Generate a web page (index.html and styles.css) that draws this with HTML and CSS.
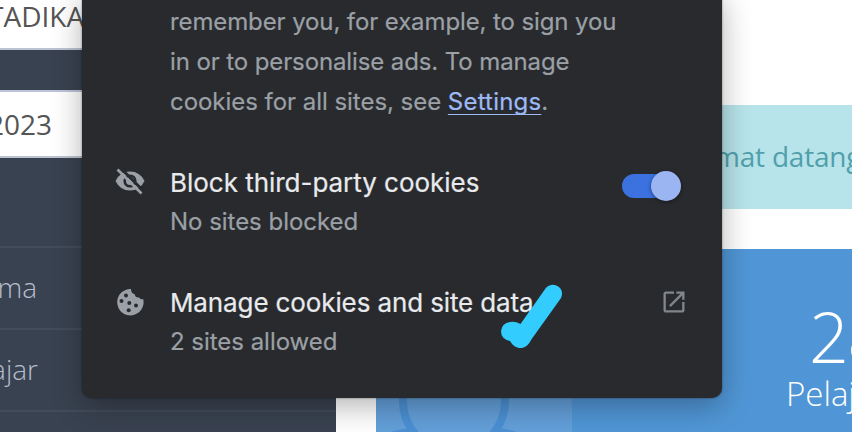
FILE: index.html
```html
<!DOCTYPE html>
<html lang="en">
<head>
<meta charset="utf-8">
<title>Cookies and site data</title>
<link rel="stylesheet" href="styles.css">
</head>
<body>
<div class="page">
  <aside class="sidebar">
    <div class="field field-name"><span>TADIKA</span></div>
    <div class="field field-year"><span>2023</span></div>
    <nav class="menu">
      <div class="menu-item"><span>ma</span></div>
      <div class="menu-item"><span>ajar</span></div>
      <div class="menu-item"></div>
    </nav>
  </aside>
  <main class="content">
    <div class="alert"><span>mat datang</span></div>
    <section class="card">
      <svg class="person" width="196" height="183" viewBox="0 0 196 183">
        <rect x="-10" y="60" width="206" height="240" rx="100" fill="#639fd9"/>
        <rect x="0" y="140" width="30" height="43" fill="#639fd9"/>
        <circle cx="78" cy="152" r="51" fill="#639fd9" stroke="#4b90d3" stroke-width="8"/>
        <path d="M15 183Q23 180 35 179L48 190M108 190L121 179Q133 180 141 183" fill="#4b90d3"/>
      </svg>
      <div class="stat"><div class="stat-number">28</div><div class="stat-label">Pelajar</div></div>
    </section>
  </main>
  <section class="popup">
    <p class="intro"><span class="l1">remember you, for example, to sign you</span><br><span class="l2">in or to personalise ads. To manage</span><br><span class="l3">cookies for all sites, see <a class="link">Settings</a>.</span></p>
    <div class="row row-block">
      <svg class="icon" width="32" height="32" viewBox="0 0 32 32"><path d="M1.500 16Q6 6.500 16 6.500T30.500 16Q26 25.500 16 25.500T1.500 16Z" fill="#9aa0a6"/><circle cx="16" cy="16" r="5.300" fill="none" stroke="#292a2d" stroke-width="2.600"/><path d="M6 2.500L30 26.500" stroke="#292a2d" stroke-width="3"/><path d="M3.500 4.500L27.500 28.500" stroke="#9aa0a6" stroke-width="2.600"/></svg>
      <div class="text"><div class="title t1">Block third-party cookies</div><div class="sub s1">No sites blocked</div></div>
      <div class="switch"><div class="knob"></div></div>
    </div>
    <div class="row">
      <svg class="icon" width="32" height="32" viewBox="0 0 32 32"><path d="M17 3A13.2 13.2 0 1 0 29.2 13Q26.5 14 25 11.5Q21.5 12 20.5 8Q17 7.500 17 3Z" fill="#9aa0a6"/><g fill="#292a2d"><circle cx="12" cy="9.500" r="2"/><circle cx="7.500" cy="15" r="2"/><circle cx="15.300" cy="17" r="2"/><circle cx="22" cy="19.500" r="2"/><circle cx="14.700" cy="24.300" r="2"/></g></svg>
      <div class="text"><div class="title t2">Manage cookies and site data</div><div class="sub s2">2 sites allowed</div></div>
      <svg class="launch" width="28" height="28" viewBox="0 0 24 24" fill="#80868b"><path d="M19 19H5V5h7V3H5c-1.110 0-2 .9-2 2v14c0 1.100.89 2 2 2h14c1.100 0 2-.9 2-2v-7h-2v7zM14 3v2h3.590l-9.830 9.830 1.410 1.410L19 6.410V10h2V3h-7z"/></svg>
    </div>
  </section>
  <svg class="check" width="70" height="70" viewBox="0 0 70 70"><path d="M10 42Q15 41 20.500 44L45.500 8.500C52 0 66 7 61 18L31 60C26 71 15 70 10 61Q1 59 1 51Q2 43 10 42Z" fill="#33ccff"/></svg>
</div>
</body>
</html>
```
FILE: styles.css
```css
* { box-sizing: border-box; }
body { margin: 0; }
.page { position: relative; display: flex; width: 852px; height: 432px; overflow: hidden; background: #fff; font-family: "Open Sans", sans-serif; }
.sidebar { flex: 0 0 336px; background: #394250; }
.field { display: flex; align-items: center; background: #fff; color: #555; font-size: 28px; white-space: nowrap; border-bottom: 2px solid #bcc3d0; }
.field-name { height: 50px; padding-bottom: 16px; }
.field-name span { margin-left: -12px; }
.field-year { height: 68px; margin-top: 40px; border-top: 2px solid #bcc3d8; }
.field-year span { width: 52px; display: flex; justify-content: flex-end; }
.menu { margin-top: 88px; }
.menu-item { height: 82px; padding-bottom: 2px; border-top: 2px solid #434c5a; color: #b5bdce; font-size: 28px; font-weight: 300; display: flex; align-items: center; }
.menu-item span { width: 38px; display: flex; justify-content: flex-end; }
.menu-item:first-child span { width: 37px; }
.content { flex: 1; padding-top: 105px; min-width: 0; }
.alert { height: 104px; background: #b7e4ea; color: #519faa; font-size: 28px; letter-spacing: -.2px; display: flex; align-items: center; padding: 0 0 2px 378px; white-space: nowrap; overflow: hidden; }
.card { display: flex; margin: 40px 0 0 40px; height: 183px; background: #5096d6; color: #fff; overflow: hidden; }
.person { flex: none; }
.stat { margin-left: 214px; padding-top: 46px; white-space: nowrap; font-weight: 300; }
.stat-number { font-size: 70px; line-height: 82px; margin-left: 23px; letter-spacing: -2px; }
.stat-label { font-size: 33px; line-height: 34px; }
.popup { position: absolute; left: 82px; top: -10px; width: 640px; height: 408px; padding: 12px 36px 0 32px; border-radius: 10px; background: #292a2d; box-shadow: 0 0 2px rgba(0,0,0,.5), 0 8px 30px rgba(0,0,0,.3); font-family: Inter, sans-serif; color: #9aa0a6; }
.intro { margin: 0 0 0 56px; font-size: 24px; line-height: 40px; white-space: nowrap; -webkit-text-stroke: .2px; }
.l1, .l2 { letter-spacing: -.11px; }
.l3 { letter-spacing: -.04px; }
.link { color: #9db9f5; text-decoration: underline; text-decoration-thickness: 1px; text-underline-offset: 4px; text-decoration-skip-ink: none; letter-spacing: .2px; }
.row { display: flex; height: 80px; margin-top: 40px; }
.row-block { margin-top: 41px; height: 79px; }
.icon { flex: none; margin-top: 3px; }
.row-block .icon { margin-top: 2px; }
.row:last-child .icon { margin-top: 4px; }
.text { flex: 1; margin-left: 24px; white-space: nowrap; -webkit-text-stroke: .2px; }
.title { color: #e8eaed; font-size: 26px; line-height: 40px; }
.row:last-child .title { padding-top: 1px; }
.t1 { letter-spacing: -.03px; }
.t2 { letter-spacing: -.12px; }
.sub { font-size: 24px; line-height: 38px; letter-spacing: -.03px; }
.switch { width: 56px; height: 24px; border-radius: 12px; margin: 11px 8px 0 0; background: #3b72e0; display: flex; justify-content: flex-end; align-items: center; }
.knob { flex: none; width: 30px; height: 30px; margin-right: -3px; border-radius: 50%; background: #9ab5f2; box-shadow: 0 1px 4px rgba(0,0,0,.45); }
.launch { flex: none; margin: 6px -2px 0 0; }
.check { position: absolute; left: 500px; top: 280px; }
```
